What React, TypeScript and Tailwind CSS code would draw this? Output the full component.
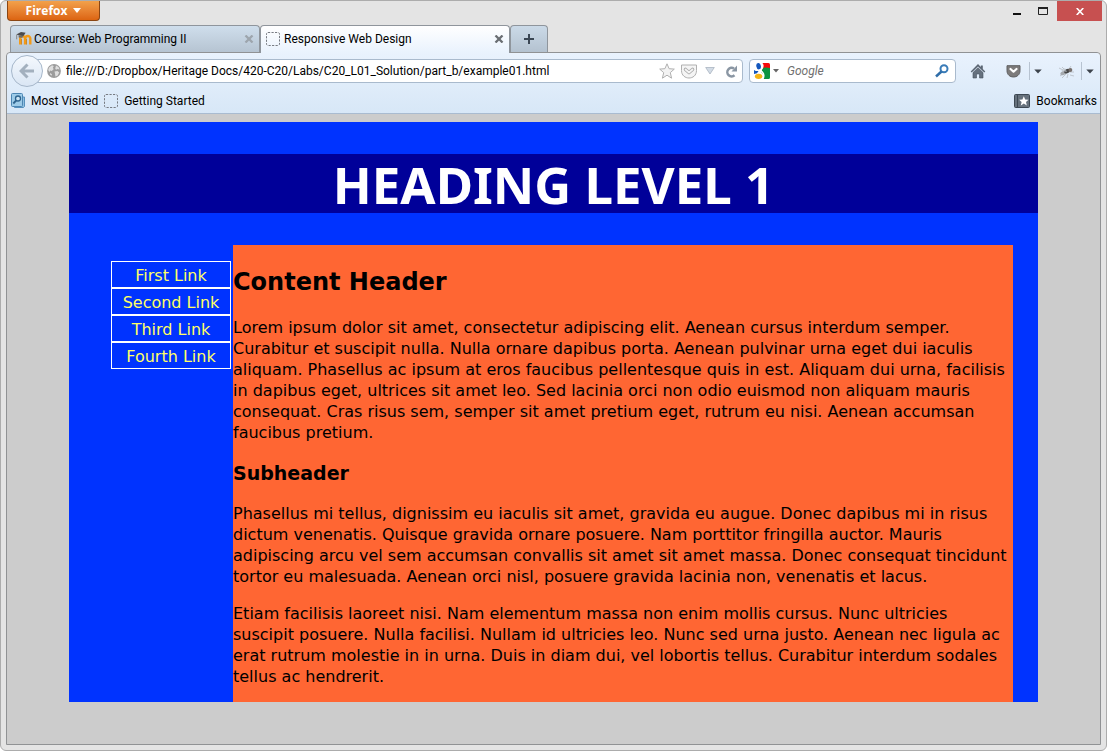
import React from "react";

const links = ["First Link", "Second Link", "Third Link", "Fourth Link"];

function DashedIcon() {
  return (
    <svg width="14" height="14" viewBox="0 0 14 14" className="shrink-0" aria-hidden="true">
      <rect x="0.5" y="0.5" width="13" height="13" rx="1.5" fill="none" stroke="#777b82" strokeDasharray="2.2 1.3" />
    </svg>
  );
}

function MoodleIcon() {
  return (
    <svg width="16" height="14" viewBox="0 0 16 14" className="shrink-0" aria-hidden="true">
      <path d="M4.200 12.500V6.700a2.200 2.200 0 0 1 4.9 0v5.800M9.300 12.500V6.500a2.500 2.500 0 0 1 5 0v6" fill="none" stroke="#f39a17" strokeWidth="2.400" />
      <path d="M5.500 7v5.500M10.500 7v5.500" stroke="#c67409" strokeWidth="0.700" />
      <path d="M0.300 2.600L5 0l4.600 0.700-2.300 3.500-3.600-0.600z" fill="#4b4b4d" />
      <path d="M2.600 3.200v2.200l3.700 0.300 1-2z" fill="#6e6c69" />
      <path d="M0.700 2.800v4.500" stroke="#77736b" strokeWidth="0.800" />
    </svg>
  );
}

function CloseIcon({ color }: { color: string }) {
  return (
    <svg width="10" height="8" viewBox="0 0 10 8" aria-hidden="true">
      <path d="M1.500 0.500L8.500 7.500M8.500 0.500L1.500 7.500" stroke={color} strokeWidth="2.300" />
    </svg>
  );
}

function ArrowDown({ color = "#3c434b" }: { color?: string }) {
  return (
    <svg width="8" height="5" viewBox="0 0 8 5" aria-hidden="true">
      <path d="M0.300 0.500h7.400L4 4.500z" fill={color} />
    </svg>
  );
}

function GoogleIcon() {
  return (
    <svg width="16" height="16" viewBox="0 0 16 16" className="shrink-0" aria-hidden="true">
      <rect width="16" height="16" rx="1.500" fill="#fff" />
      <path d="M8 0h6.500A1.500 1.500 0 0 1 16 1.500V6H8.500z" fill="#f50a0a" />
      <path d="M8 6c1-1.500 4-2 8-1v9.500a1.500 1.500 0 0 1-1.500 1.500H9c2-3 .5-5-1.500-6.500z" fill="#0b9340" />
      <ellipse cx="4.600" cy="3.200" rx="2.300" ry="3.200" fill="#1457bd" transform="rotate(-10 4.600 3.200)" />
      <path d="M0 7c2 1.500 3.500 1 4.500 1L3 10.300 0 11z" fill="#1457bd" />
      <ellipse cx="4.600" cy="13.300" rx="3.700" ry="2.600" fill="#f5b414" />
      <path d="M7.500 0c1.800 2 1.600 4.500-.2 6.500-.8 1-.2 1.500.8 2.300 2 1.700 2.200 4.200.8 7.200" fill="none" stroke="#fff" strokeWidth="1.500" />
    </svg>
  );
}

function Tools() {
  return (
    <div className="flex items-center pl-3.5 pr-1.5">
      <button aria-label="Home" className="mr-5">
        <svg width="16" height="16" viewBox="0 0 16 16" className="block" aria-hidden="true">
          <path d="M8 1L0.700 8.500l1 1L8 3.500l6.300 6 1-1L12.800 6V2.500h-2v1.500z" fill="#5b6673" />
          <path d="M3 9.500l5-4.800 5 4.800V15H9.500v-4h-3v4H3z" fill="#66717e" stroke="#48535f" strokeWidth="0.600" />
        </svg>
      </button>
      <button aria-label="Save to Pocket" className="mr-2">
        <svg width="15" height="13" viewBox="0 0 15 13" className="block" aria-hidden="true">
          <path d="M1 0.700h13v5c0 8.400-13 8.400-13 0z" fill="#7d7b7b" stroke="#5f5f61" />
          <path d="M4.500 4l3 2.700L10.500 4" fill="none" stroke="#fff" strokeWidth="2.200" strokeLinecap="round" strokeLinejoin="round" />
        </svg>
      </button>
      <button aria-label="Pocket options" className="flex h-[18px] items-center border-l border-[#b7c3d1] px-1"><ArrowDown /></button>
      <button aria-label="Firebug" className="ml-3 mr-1.5">
        <svg width="17" height="15" viewBox="0 0 17 15" className="block" aria-hidden="true">
          <path d="M1 4l4 2M2 12l4-3M4 14l4-4M9 14l1-4M12 11l4 1M12 8l4 0M11 5l2-3M6 5L4 3" stroke="#b0b5ba" strokeWidth="0.700" />
          <ellipse cx="5.500" cy="9" rx="3.300" ry="1.900" fill="#a5a9ae" transform="rotate(-25 5.500 9)" />
          <ellipse cx="9" cy="7.200" rx="3" ry="2.100" fill="#474747" transform="rotate(-25 9 7.200)" />
          <ellipse cx="12.400" cy="6" rx="1.900" ry="1.900" fill="#77706d" />
          <path d="M7 4l-4 3 6 1z" fill="#bcc2c8" opacity=".7" />
        </svg>
      </button>
      <button aria-label="Firebug options" className="flex h-[18px] items-center border-l border-[#b7c3d1] pl-1"><ArrowDown /></button>
    </div>
  );
}

function TitleBar() {
  return (
    <div className="flex h-6 items-start justify-between pl-1.5">
      <button className="flex h-5 w-[93px] items-center justify-center gap-1.5 rounded-b border border-t-0 border-[#8a4512] bg-linear-to-b from-[#f2a14a] to-[#dc6410] font-['Open_Sans',sans-serif] text-[12px] font-bold text-white">
        Firefox
        <svg width="8" height="5" viewBox="0 0 8 5" aria-hidden="true"><path d="M0 0h8L4 5z" fill="#fff" /></svg>
      </button>
      <div className="flex items-start pr-1">
        <button aria-label="Minimize" className="flex h-5 w-6 items-center justify-center">
          <svg width="8" height="10" viewBox="0 0 8 10" aria-hidden="true"><path d="M0 8h8" stroke="#111" strokeWidth="2" /></svg>
        </button>
        <button aria-label="Maximize" className="flex h-5 w-7 items-center justify-center">
          <svg width="10" height="8" viewBox="0 0 10 8" aria-hidden="true">
            <path d="M0.500 0.500h9v7h-9z" fill="none" stroke="#222" />
            <path d="M0 1h10" stroke="#222" strokeWidth="2" />
          </svg>
        </button>
        <button aria-label="Close window" className="flex h-5 w-[45px] items-center justify-center bg-[#c75050]">
          <svg width="8" height="7" viewBox="0 0 8 7" aria-hidden="true"><path d="M0.700 0l6.600 7M7.300 0L0.700 7" stroke="#fff" strokeWidth="1.600" /></svg>
        </button>
      </div>
    </div>
  );
}

function TabStrip() {
  return (
    <div className="flex h-[27px] pl-[9px]">
      <div className="flex w-[250px] items-center rounded-t border border-b-0 border-[#8f959c] bg-linear-to-b from-[#cfdeec] to-[#b6c4d2] px-[5px]">
        <MoodleIcon />
        <span className="ml-0.5 flex-1">Course: Web Programming II</span>
        <button aria-label="Close tab"><CloseIcon color="#9da5ad" /></button>
      </div>
      <div className="relative -mb-px flex w-[250px] items-center rounded-t border border-b-0 border-[#8f959c] bg-linear-to-b from-white to-[#e9f2fd] px-[5px] pb-px">
        <DashedIcon />
        <span className="ml-1 flex-1">Responsive Web Design</span>
        <button aria-label="Close tab"><CloseIcon color="#6a6e73" /></button>
      </div>
      <button aria-label="New tab" className="flex w-[38px] items-center justify-center rounded-t border border-b-0 border-[#8f959c] bg-linear-to-b from-[#cbdae8] to-[#b4c2d0]">
        <svg width="10" height="10" viewBox="0 0 10 10" aria-hidden="true"><path d="M0 5h10M5 0v10" stroke="#3b4754" strokeWidth="2" /></svg>
      </button>
    </div>
  );
}

function NavBar() {
  return (
    <div className="flex h-9 items-center">
      <button aria-label="Back" className="relative z-10 ml-1 flex size-8 shrink-0 items-center justify-center rounded-full border border-[#a6b7ca] bg-linear-to-b from-[#f4f8fd] to-[#dae6f4]">
        <svg width="16" height="16" viewBox="0 0 16 16" aria-hidden="true">
          <path d="M8.500 1.500L2 8l6.500 6.500M2.500 8H15" fill="none" stroke="#a3b0be" strokeWidth="3" />
        </svg>
      </button>
      <div className="-ml-3 flex h-6 min-w-0 flex-1 items-center rounded-sm border border-[#a9bacd] bg-white pl-[15px] pr-1">
        <svg width="14" height="14" viewBox="0 0 14 14" className="shrink-0" aria-hidden="true">
          <circle cx="7" cy="7" r="6.900" fill="#9c9c9c" />
          <path d="M2 3.500L5 1.200l1.800.8-1 2 1 1-2 2-1.600-.5-.8 1.500L1.200 6zM9 1.600l2.500 1.400 1 2.500-2-.4-1.500.6-.8-1.200zM7.500 7.500l3-.5 1.700 1.500-1.500 3L8.400 12.500l-.4-3zM3 9l2 1.200-.4 1.600L3 10.500z" fill="#dedede" />
        </svg>
        <input aria-label="Address" defaultValue="file:///D:/Dropbox/Heritage Docs/420-C20/Labs/C20_L01_Solution/part_b/example01.html" className="ml-[5px] min-w-0 flex-1 bg-transparent outline-none" />
        <button aria-label="Bookmark this page">
          <svg width="16" height="16" viewBox="0 0 16 16" aria-hidden="true">
            <path d="M8 0.800l2.100 4.900 5.200.4-4 3.500 1.300 5.600L8 12.200l-4.600 3 1.300-5.600-4-3.500 5.200-.4z" fill="#f3f3f3" stroke="#b0b0b0" />
          </svg>
        </button>
        <button aria-label="Save page" className="ml-1.5">
          <svg width="16" height="15" viewBox="0 0 16 15" aria-hidden="true">
            <path d="M0.500 1h15v5.500c0 10-15 10-15 0z" fill="#f5f5f5" stroke="#b0b0b0" />
            <path d="M4.500 5.500l3.500 3 3.500-3" fill="none" stroke="#aaa" strokeWidth="3.600" strokeLinecap="round" strokeLinejoin="round" />
            <path d="M4.500 5.500l3.500 3 3.500-3" fill="none" stroke="#f5f5f5" strokeWidth="1.700" strokeLinecap="round" strokeLinejoin="round" />
          </svg>
        </button>
        <button aria-label="Show history" className="ml-2">
          <svg width="10" height="8" viewBox="0 0 10 8" aria-hidden="true"><path d="M0.700 0.500h8.600L5 7z" fill="#d3dce6" stroke="#a9b4c0" strokeWidth="0.800" /></svg>
        </button>
        <button aria-label="Reload" className="ml-2.5">
          <svg width="13" height="13" viewBox="0 0 13 13" aria-hidden="true">
            <path d="M9.500 10.300A4.300 4.300 0 1 1 9 3.500" fill="none" stroke="#8a96a3" strokeWidth="2.500" />
            <path d="M12 0.500v6H6.500z" fill="#8a96a3" />
          </svg>
        </button>
      </div>
      <div className="ml-1.5 flex h-6 w-[207px] items-center rounded-sm border border-[#a9bacd] bg-white pl-1 pr-1.5">
        <GoogleIcon />
        <button aria-label="Choose search engine" className="ml-[3px]">
          <svg width="6" height="4" viewBox="0 0 6 4" aria-hidden="true"><path d="M0 0h6L3 3.500z" fill="#666" /></svg>
        </button>
        <input aria-label="Search" placeholder="Google" className="ml-2 min-w-0 flex-1 bg-transparent italic outline-none placeholder:text-[#707070]" />
        <button aria-label="Submit search">
          <svg width="14" height="14" viewBox="0 0 14 14" aria-hidden="true">
            <circle cx="9" cy="4.800" r="3.500" fill="none" stroke="#3a7cb8" strokeWidth="2" />
            <path d="M6.500 7.500L1 12.500" stroke="#2f6da8" strokeWidth="2.500" />
          </svg>
        </button>
      </div>
      <Tools />
    </div>
  );
}

function BookmarksBar() {
  return (
    <div className="flex h-[25px] items-center border-b border-[#a9bbd0] pl-1 pr-[3px] pb-px">
      <button className="flex items-center">
        <svg width="14" height="15" viewBox="0 0 14 15" aria-hidden="true">
          <path d="M2.500 4h11v9.500l-1 1h-9z" fill="#8fc0e0" stroke="#5590bd" />
          <rect x="0.500" y="0.500" width="11" height="13" rx="1" fill="#9dcbe8" stroke="#4c86b3" />
          <circle cx="7" cy="5.500" r="2.500" fill="#c9e4f5" stroke="#2e648f" strokeWidth="1.300" />
          <path d="M5.200 7.500L2.300 10.500" stroke="#2e648f" strokeWidth="1.800" />
        </svg>
        <span className="ml-1.5">Most Visited</span>
      </button>
      <button className="ml-1.5 flex items-center">
        <DashedIcon />
        <span className="ml-1.5">Getting Started</span>
      </button>
      <button className="ml-auto flex items-center">
        <svg width="16" height="14" viewBox="0 0 16 14" aria-hidden="true">
          <rect x="0.500" y="0.500" width="15" height="13" rx="1" fill="#66717c" stroke="#3d4853" />
          <path d="M3.500 1v12" stroke="#3d4853" />
          <path d="M9.800 2.200l1.400 3.200 3.300.3-2.500 2.200.8 3.500-3-1.900-3 1.900.8-3.500L5.100 5.700l3.300-.3z" fill="#fff" />
        </svg>
        <span className="ml-1.5">Bookmarks</span>
      </button>
    </div>
  );
}

function WebPage() {
  return (
    <main className="flex-1 bg-[#cccccc] px-[62px] pb-10 pt-2 font-['DejaVu_Sans',sans-serif] text-base leading-[21px] text-black">
      <div className="bg-[#0033ff] pt-8">
        <h1 className="bg-[#000099] pb-px pt-[3px] text-center font-['Noto_Sans',sans-serif] text-[51px] font-bold leading-[55px] text-white">HEADING LEVEL 1</h1>
        <div className="mt-8 flex items-start pl-[42px] pr-[25px]">
          <nav className="mr-0.5 mt-4 w-[120px] shrink-0">
            <ul>
              {links.map((label) => (
                <li key={label}>
                  <a href="#" className="block border border-white px-1 pb-px pt-[3px] text-center text-[#ffff66]">{label}</a>
                </li>
              ))}
            </ul>
          </nav>
          <article className="min-w-0 flex-1 bg-[#ff6633] pb-[15px] pt-[21px]">
            <h2 className="mb-[19px] text-2xl font-bold">Content Header</h2>
            <p>
              Lorem ipsum dolor sit amet, consectetur adipiscing elit. Aenean cursus interdum semper. Curabitur et suscipit nulla. Nulla ornare dapibus porta. Aenean pulvinar urna eget dui iaculis aliquam. Phasellus ac ipsum at eros faucibus pellentesque quis in est. Aliquam dui urna, facilisis in dapibus eget, ultrices sit amet leo. Sed lacinia orci non odio euismod non aliquam mauris consequat. Cras risus sem, semper sit amet pretium eget, rutrum eu nisi. Aenean accumsan faucibus pretium.
            </p>
            <h3 className="my-4 text-[19px] font-bold leading-7">Subheader</h3>
            <p>
              Phasellus mi tellus, dignissim eu iaculis sit amet, gravida eu augue. Donec dapibus mi in risus dictum venenatis. Quisque gravida ornare posuere. Nam porttitor fringilla auctor. Mauris adipiscing arcu vel sem accumsan convallis sit amet sit amet massa. Donec consequat tincidunt tortor eu malesuada. Aenean orci nisl, posuere gravida lacinia non, venenatis et lacus.
            </p>
            <p className="mt-4">
              Etiam facilisis laoreet nisi. Nam elementum massa non enim mollis cursus. Nunc ultricies suscipit posuere. Nulla facilisi. Nullam id ultricies leo. Nunc sed urna justo. Aenean nec ligula ac erat rutrum molestie in in urna. Duis in diam dui, vel lobortis tellus. Curabitur interdum sodales tellus ac hendrerit.
            </p>
          </article>
        </div>
      </div>
    </main>
  );
}

export default function App() {
  return (
    <div className="flex min-h-screen flex-col rounded-md border border-[#acacac] bg-[#e4e4e4] font-[Roboto,sans-serif] text-[12px] leading-4 text-black">
      <TitleBar />
      <TabStrip />
      <div className="mx-[5px] mb-[5px] flex flex-1 flex-col rounded-t border border-[#909294]">
        <div className="rounded-t bg-linear-to-b from-[#e9f2fd] to-[#d7e7f7]">
          <NavBar />
          <BookmarksBar />
        </div>
        <WebPage />
      </div>
    </div>
  );
}
